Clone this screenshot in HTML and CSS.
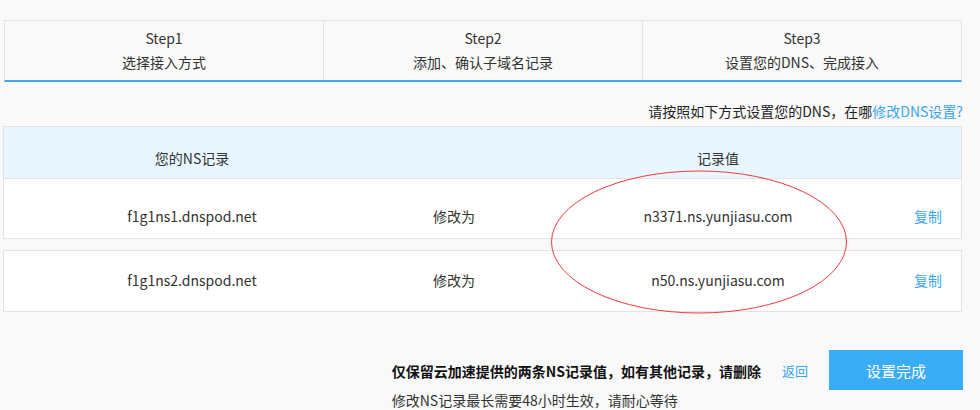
FILE: index.html
```html
<!DOCTYPE html>
<html lang="zh-CN">
<head>
<meta charset="utf-8">
<title>设置您的DNS</title>
<link rel="stylesheet" href="styles.css">
</head>
<body>
<div class="page">
  <div class="steps">
    <div class="step">
      <div class="step-no">Step1</div>
      <div class="step-name">选择接入方式</div>
    </div>
    <div class="step">
      <div class="step-no">Step2</div>
      <div class="step-name">添加、确认子域名记录</div>
    </div>
    <div class="step">
      <div class="step-no">Step3</div>
      <div class="step-name">设置您的DNS、完成接入</div>
    </div>
  </div>

  <div class="hint">请按照如下方式设置您的DNS，在哪<a class="link">修改DNS设置?</a></div>

  <div class="table">
    <div class="row head">
      <div class="cell">您的NS记录</div>
      <div class="cell"></div>
      <div class="cell">记录值</div>
      <div class="cell"></div>
    </div>
    <div class="row first">
      <div class="cell">f1g1ns1.dnspod.net</div>
      <div class="cell">修改为</div>
      <div class="cell">n3371.ns.yunjiasu.com</div>
      <div class="cell"><a class="link">复制</a></div>
    </div>
    <div class="row second">
      <div class="cell">f1g1ns2.dnspod.net</div>
      <div class="cell">修改为</div>
      <div class="cell">n50.ns.yunjiasu.com</div>
      <div class="cell"><a class="link">复制</a></div>
    </div>
  </div>

  <div class="footer">
    <div class="notes">
      <div class="note-strong">仅保留云加速提供的两条NS记录值，如有其他记录，请删除</div>
      <div class="note">修改NS记录最长需要48小时生效，请耐心等待</div>
    </div>
    <a class="link back">返回</a>
    <button class="done">设置完成</button>
  </div>

  <svg class="mark" width="300" height="146" viewBox="0 0 300 146">
    <ellipse cx="148" cy="72" rx="147.5" ry="71" fill="none" stroke="#ee3b3b" stroke-width="1"/>
  </svg>
</div>
</body>
</html>
```
FILE: styles.css
```css
html, body {
  margin: 0;
  padding: 0;
  background: #f9f9f9;
}
body {
  font-family: "Noto Sans CJK SC", "Open Sans", sans-serif;
  font-size: 14px;
  color: #333;
}
.page {
  position: relative;
  width: 980px;
  height: 410px;
  overflow: hidden;
  padding-top: 20px;
  box-sizing: border-box;
}
.steps {
  display: flex;
  margin-left: 4px;
  width: 958px;
  border: 1px solid #e2e2e2;
  border-bottom: 2px solid #3aa9f2;
  box-sizing: border-box;
}
.step {
  flex: 1;
  text-align: center;
  padding: 7px 0 8px;
  border-left: 1px solid #e2e2e2;
}
.step:first-child {
  border-left: none;
}
.step-no {
  line-height: 20px;
}
.step-name {
  line-height: 20px;
  margin-top: 4px;
}
.hint {
  text-align: right;
  width: 963px;
  line-height: 20px;
  margin-top: 19px;
  color: #222;
}
.link {
  color: #3aa6f0;
  cursor: pointer;
}
.table {
  margin-left: 3px;
  width: 959px;
  margin-top: 5px;
}
.row {
  display: grid;
  grid-template-columns: 376px 148px 380px 40px;
  align-items: center;
  height: 61px;
  background: #fff;
  border: 1px solid #e3e3e3;
  box-sizing: border-box;
  text-align: center;
}
.row.head {
  height: 52px;
  background: #e9f6ff;
  border-bottom: none;
  padding-top: 11px;
}
.row.first {
  padding-top: 14px;
}
.row.second {
  margin-top: 11px;
  height: 62px;
  padding-bottom: 2px;
}
.footer {
  display: flex;
  justify-content: flex-end;
  align-items: flex-start;
  gap: 21px;
  padding-right: 17px;
  margin-top: 38px;
}
.notes {
  margin-top: 11px;
}
.note-strong {
  font-weight: bold;
  color: #111;
  line-height: 20px;
}
.note {
  margin-top: 9px;
  line-height: 20px;
  color: #333;
}
.back {
  margin-top: 11px;
  line-height: 20px;
  font-size: 13px;
}
.done {
  width: 134px;
  height: 40px;
  border: none;
  background: #3aacf5;
  color: #fff;
  font-family: inherit;
  font-size: 15px;
  cursor: pointer;
}
.mark {
  position: absolute;
  left: 551px;
  top: 170px;
  pointer-events: none;
}
```
